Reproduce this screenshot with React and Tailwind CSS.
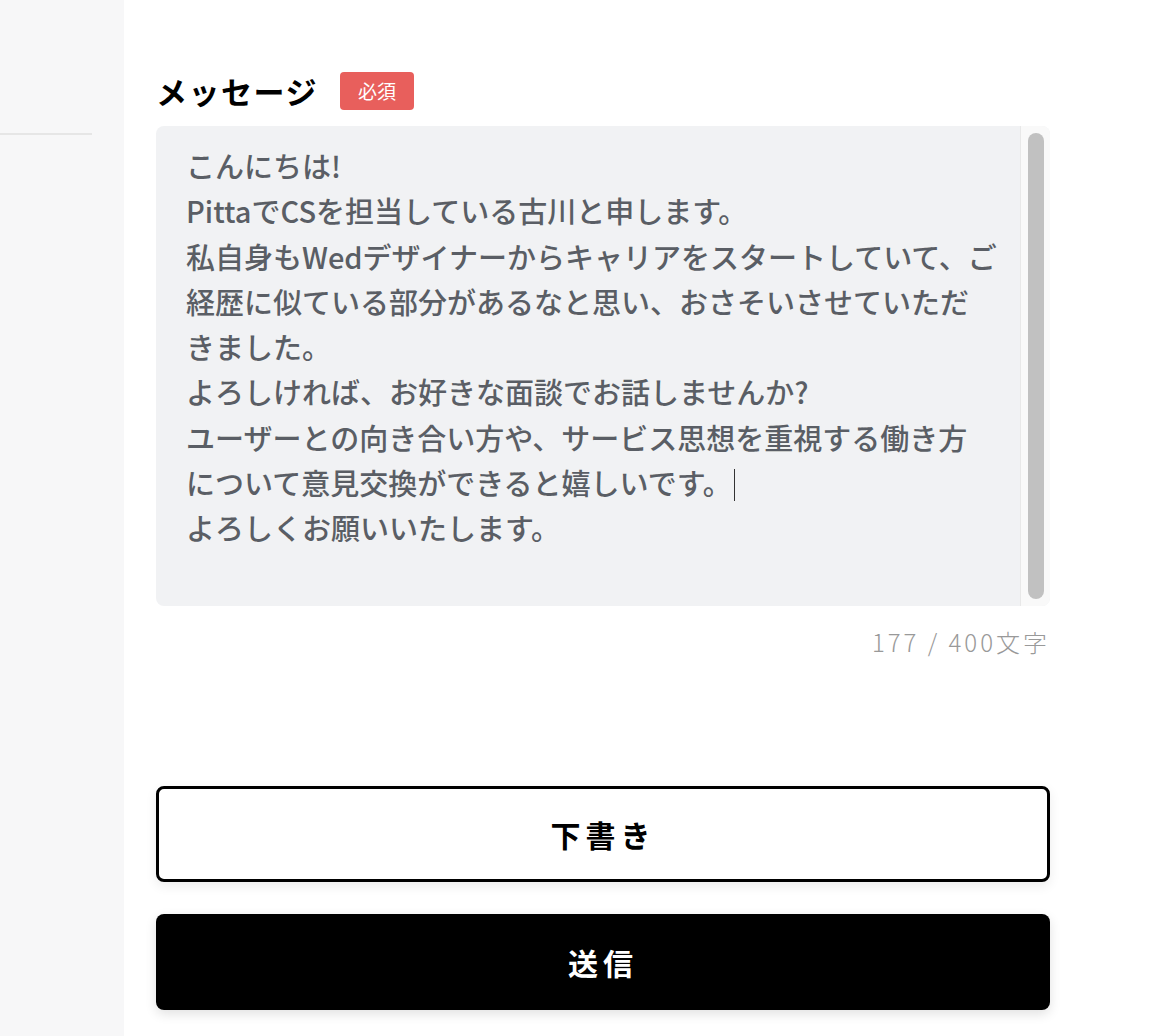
import { useState } from 'react';

const FONT = "font-['Noto_Sans_CJK_JP','Noto_Sans',sans-serif]";

// Lines as they wrap in the reference textarea
const LINES = [
  'こんにちは!',
  'PittaでCSを担当している古川と申します。',
  '私自身もWedデザイナーからキャリアをスタートしていて、ご',
  '経歴に似ている部分があるなと思い、おさそいさせていただ',
  'きました。',
  'よろしければ、お好きな面談でお話しませんか?',
  'ユーザーとの向き合い方や、サービス思想を重視する働き方',
  'について意見交換ができると嬉しいです。',
  'よろしくお願いいたします。',
];

export default function App() {
  const [count] = useState(177);

  return (
    <div className={`flex min-h-[1036px] w-full bg-white ${FONT}`}>
      {/* sidebar stub */}
      <aside className="w-[124px] shrink-0 bg-[#f7f7f8]">
        <div className="mt-[133px] h-[2px] w-[92px] bg-[#e6e6e6]" />
      </aside>

      <main className="flex-1 pl-[32px] pr-[114px] pt-[72px]">
        <div className="flex items-center gap-[22px]">
          <h2 className="text-[31px] font-bold leading-[38px] tracking-[1.5px] text-black">メッセージ</h2>
          <span className="flex h-[38px] w-[74px] items-center justify-center rounded-[4px] bg-[#e85f5c] text-[19px] text-white">
            必須
          </span>
        </div>

        <div className="mt-[16px] flex h-[480px] overflow-hidden rounded-[8px] bg-[#f1f2f4]">
          <div className="flex-1 overflow-hidden pl-[30px] pt-[17px] text-[29px] font-medium leading-[45.3px] text-[#5a5e65]">
            {LINES.map((line, i) => (
              <div key={i} className="whitespace-nowrap">
                {line}
                {i === 7 && (
                  <span className="ml-[2px] inline-block h-[32px] w-[1.5px] translate-y-[6px] bg-[#333]" />
                )}
              </div>
            ))}
          </div>
          {/* scrollbar */}
          <div className="flex w-[30px] shrink-0 justify-center border-l border-[#e8e8e8] bg-[#f9f9f9] py-[7px]">
            <div className="w-[16px] rounded-full bg-[#c1c1c1]" />
          </div>
        </div>

        <p className="mt-[18px] text-right text-[24px] font-light tracking-[3px] text-[#999]">
          {count} / 400文字
        </p>

        <div className="mt-[126px] flex flex-col gap-[32px]">
          <button className="h-[96px] w-full rounded-[8px] border-[3px] border-black bg-white text-[30px] font-bold tracking-[5px] text-black shadow-[0_4px_12px_rgba(0,0,0,0.08)]">
            下書き
          </button>
          <button className="h-[96px] w-full rounded-[8px] bg-black text-[30px] font-bold tracking-[5px] text-white shadow-[0_4px_12px_rgba(0,0,0,0.12)]">
            送信
          </button>
        </div>
      </main>
    </div>
  );
}
